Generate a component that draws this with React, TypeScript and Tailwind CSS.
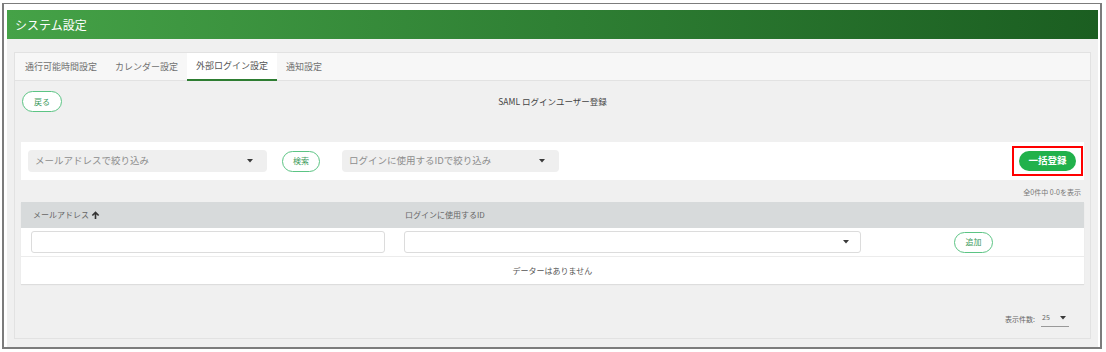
import { ReactNode } from "react"

const jp = "font-['Noto_Sans_CJK_JP','Noto_Sans',sans-serif]"

function Caret() {
  return (
    <svg width="6" height="3.5" viewBox="0 0 6 3.5" className="shrink-0">
      <polygon points="0,0 6,0 3,3.5" fill="#3a3a3a" />
    </svg>
  )
}

function FilterSelect({ label, width }: { label: string; width: string }) {
  return (
    <div className={`${width} h-[22px] bg-[#efefef] rounded-[4px] flex items-center justify-between pl-[7px] pr-[14px]`}>
      <span className="text-[9.5px] text-[#8d8d8d] leading-none">{label}</span>
      <Caret />
    </div>
  )
}

function OutlineButton({ children, className }: { children: ReactNode; className: string }) {
  return (
    <button className={`${className} h-[21px] rounded-full border border-[#5cc484] bg-white text-[8px] text-[#3c9a5b] flex items-center justify-center leading-none`}>
      {children}
    </button>
  )
}

const tabs = ["通行可能時間設定", "カレンダー設定", "外部ログイン設定", "通知設定"]

export default function App() {
  return (
    <div className={`w-[1106px] h-[352px] bg-white pt-[3px] pl-[2px] ${jp}`}>
      <div className="w-[1100px] h-[346px] border-t border-x-2 border-b-2 border-[#7c7c7c] pt-[6px] pl-[3px] pr-[2px] flex flex-col">
        <div className="h-[29px] shrink-0 bg-gradient-to-r from-[#45a247] via-[#2f8034] to-[#1b5e21] flex items-center pl-[8px]">
          <span className="text-white text-[12px] leading-none">システム設定</span>
        </div>

        <div className="flex-1 bg-[#f0f0f0] pt-[13px] px-[7px] pb-[8px]">
          <div className="h-full border border-[#e2e2e2] flex flex-col">
            {/* tabs */}
            <div className="h-[28px] shrink-0 bg-[#f7f7f7] border-b border-[#e2e2e2] flex pl-px">
              {tabs.map((t, i) => (
                <div
                  key={t}
                  className={
                    i === 2
                      ? "px-[9px] bg-white border-b-2 border-[#2e7d32] -mb-px flex items-center text-[9px] text-[#555]"
                      : "px-[9px] flex items-center text-[9px] text-[#707070]"
                  }
                >
                  {t}
                </div>
              ))}
            </div>

            <div className="flex-1 flex flex-col pl-[6px] pr-[6px]">
              <div className="mt-[10px] grid grid-cols-[1fr_auto_1fr] items-center h-[20px]">
                <div>
                  <OutlineButton className="w-[40px] h-[20px] ml-px">戻る</OutlineButton>
                </div>
                <span className="text-[8.5px] text-[#444] leading-none">SAML ログインユーザー登録</span>
                <div />
              </div>

              {/* filter bar */}
              <div className="mt-[31px] h-[38px] bg-white flex items-center pl-[7px] pr-[1px]">
                <FilterSelect label="メールアドレスで絞り込み" width="w-[239px]" />
                <OutlineButton className="w-[38px] ml-[15px]">検索</OutlineButton>
                <div className="ml-[22px]">
                  <FilterSelect label="ログインに使用するIDで絞り込み" width="w-[217px]" />
                </div>
                <div className="ml-auto w-[71px] h-[30px] border-2 border-[#ff0000] flex items-center justify-center">
                  <button className="w-[57px] h-[20px] rounded-full bg-[#21b14b] text-white text-[9.5px] font-bold leading-none">
                    一括登録
                  </button>
                </div>
              </div>

              <div className="mt-[7px] h-[10px] flex justify-end pr-[3px] text-[7px] text-[#777] leading-[10px]">
                全0件中 0-0を表示
              </div>

              {/* table */}
              <div className="mt-[5px] shadow-[0_1px_1px_rgba(0,0,0,0.08)]">
                <div className="h-[26px] bg-[#d7dadb] grid grid-cols-[374px_476px_1fr] items-center text-[8px] text-[#666]">
                  <div className="pl-[12px] flex items-center gap-[2px]">
                    メールアドレス
                    <svg width="9" height="9" viewBox="0 0 10 10">
                      <path d="M5 9V1.5M1.5 5L5 1.5 8.5 5" stroke="#333" strokeWidth="1.8" fill="none" />
                    </svg>
                  </div>
                  <div className="pl-[10px]">ログインに使用するID</div>
                  <div />
                </div>
                <div className="h-[29px] bg-white border-b border-[#ececec] grid grid-cols-[374px_476px_1fr] items-center">
                  <div className="px-[10px]">
                    <div className="h-[22px] border border-[#dcdcdc] rounded-[3px] bg-white" />
                  </div>
                  <div className="pl-[9px] pr-[10px]">
                    <div className="h-[22px] border border-[#dcdcdc] rounded-[3px] bg-white flex items-center justify-end pr-[11px]">
                      <Caret />
                    </div>
                  </div>
                  <div className="flex justify-center pr-[8px]">
                    <OutlineButton className="w-[39px]">追加</OutlineButton>
                  </div>
                </div>
                <div className="h-[27px] bg-white flex items-center justify-center text-[8px] text-[#555]">
                  データーはありません
                </div>
              </div>

              {/* pagination */}
              <div className="mt-auto mb-[11px] flex items-end justify-end pr-[15px] text-[7px] text-[#666]">
                <span className="mb-[3px]">表示件数:</span>
                <div className="ml-[6px] w-[28px] h-[14px] border-b border-[#999] flex items-start justify-between pl-[1px] pr-[3px]">
                  <span className="leading-[9px]">25</span>
                  <div className="mt-[3px]">
                    <Caret />
                  </div>
                </div>
              </div>
            </div>
          </div>
        </div>
      </div>
    </div>
  )
}
